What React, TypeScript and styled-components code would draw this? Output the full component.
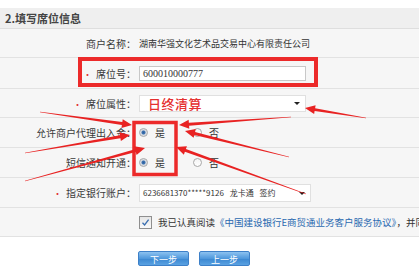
import styled, { createGlobalStyle } from 'styled-components'

const GlobalStyle = createGlobalStyle`
  html, body {
    margin: 0;
    padding: 0;
    background: #ffffff;
  }
  body {
    font-family: "Noto Sans CJK SC", "Noto Sans", sans-serif;
    color: #333;
  }
`

const Page = styled.div`
  position: relative;
  width: 419px;
  height: 279px;
  overflow: hidden;
  padding-top: 8px;
  box-sizing: border-box;
`

const SectionHeader = styled.div`
  height: 20px;
  line-height: 20px;
  padding-left: 5px;
  background: #efefef;
  border-bottom: 1px solid #dedede;
  font-size: 11px;
  font-weight: 700;
  color: #444;
`

const Form = styled.div`
  background: #f6f6f6;
`

const Row = styled.div<{ $h: number }>`
  display: grid;
  grid-template-columns: 136px 1fr;
  align-items: center;
  height: ${({ $h }) => $h}px;
  border-bottom: 1px solid #e2e2e2;
`

const Label = styled.div`
  text-align: right;
  font-size: 10px;
  color: #3a3a3a;
  white-space: nowrap;
`

const Bullet = styled.span`
  color: #e03030;
  font-size: 9px;
  margin-right: 4px;
`

const Value = styled.div`
  display: flex;
  align-items: center;
  padding-left: 3px;
  font-size: 9px;
  white-space: nowrap;
  overflow: hidden;
`

const TextInput = styled.div`
  width: 167px;
  height: 15px;
  box-sizing: border-box;
  border: 1px solid #c8c8c8;
  background: #fff;
  font-family: "Liberation Serif", serif;
  font-size: 10px;
  line-height: 13px;
  padding-left: 3px;
`

const Select = styled.div<{ $w: number; $h: number }>`
  position: relative;
  display: flex;
  align-items: center;
  width: ${({ $w }) => $w}px;
  height: ${({ $h }) => $h}px;
  box-sizing: border-box;
  border: 1px solid #e0e0e0;
  background: #fff;
  padding-left: 3px;

  &::after {
    content: '';
    position: absolute;
    right: 5px;
    top: 50%;
    margin-top: -1px;
    border-left: 3px solid transparent;
    border-right: 3px solid transparent;
    border-top: 3px solid #222;
  }
`

const SettleText = styled.span`
  color: #e53030;
  font-size: 13px;
  font-weight: 500;
  letter-spacing: 0.5px;
  padding-left: 5px;
`

const BankText = styled.span`
  font-size: 8px;
  color: #333;
  word-spacing: 4px;
`

const RadioGroup = styled.div`
  display: flex;
  align-items: center;
  gap: 28px;
  padding-left: 3px;
`

const RadioItem = styled.label`
  display: flex;
  align-items: center;
  gap: 7px;
  font-size: 10px;
  color: #333;
`

const RadioDot = styled.span<{ $checked?: boolean }>`
  width: 9px;
  height: 9px;
  border-radius: 50%;
  box-sizing: border-box;
  border: 1px solid #a8a8a8;
  background: ${({ $checked }) =>
    $checked
      ? 'radial-gradient(circle, #2f5f9a 0, #3c74b4 1.6px, #d4d8de 2.4px, #eef0f3 100%)'
      : 'linear-gradient(#f4f4f4, #ffffff)'};
`

const AgreeRow = styled.div`
  display: flex;
  align-items: center;
  gap: 6px;
  padding-left: 3px;
  font-size: 9.5px;
  white-space: nowrap;
`

const CheckBox = styled.span`
  display: flex;
  align-items: center;
  justify-content: center;
  width: 13px;
  height: 13px;
  box-sizing: border-box;
  border: 1px solid #8f8f8f;
  background: linear-gradient(#e6e6e6, #fafafa);
  flex-shrink: 0;
`

const Link = styled.span`
  color: #2a69b0;
`

const Buttons = styled.div`
  display: flex;
  gap: 10px;
  padding: 14px 0 0 138px;
`

const Button = styled.div`
  width: 51px;
  height: 15px;
  line-height: 15px;
  text-align: center;
  font-size: 9px;
  color: #fff;
  border-radius: 2px;
  border: 1px solid #3d80c8;
  box-sizing: border-box;
  background: linear-gradient(#8cc2f0, #4f98dc 50%, #3a86d0 51%, #5aa2e2);
`

const Overlay = styled.svg`
  position: absolute;
  left: 0;
  top: 0;
  pointer-events: none;
`

type Pt = [number, number]

function arrowPoints(tail: Pt, head: Pt) {
  const dx = head[0] - tail[0]
  const dy = head[1] - tail[1]
  const len = Math.hypot(dx, dy)
  const ux = dx / len
  const uy = dy / len
  const nx = -uy
  const ny = ux
  const hl = 10
  const base: Pt = [head[0] - ux * hl, head[1] - uy * hl]
  const p = (o: Pt, w: number): string => `${o[0] + nx * w},${o[1] + ny * w}`
  return [
    p(tail, 0.3),
    p(base, 1.5),
    p(base, 4.5),
    `${head[0]},${head[1]}`,
    p(base, -4.5),
    p(base, -1.5),
    p(tail, -0.3),
  ].join(' ')
}

const arrows: [Pt, Pt][] = [
  [[40, 112], [132, 125]],
  [[25, 153], [130, 135]],
  [[25, 181], [145, 148]],
  [[291, 117], [179, 125]],
  [[289, 157], [185, 131]],
  [[306, 194], [176, 147]],
  [[366, 118], [305, 108]],
]

export default function App() {
  return (
    <Page>
      <GlobalStyle />
      <SectionHeader>2.填写席位信息</SectionHeader>
      <Form>
        <Row $h={28}>
          <Label>商户名称：</Label>
          <Value>湖南华强文化艺术品交易中心有限责任公司</Value>
        </Row>
        <Row $h={30}>
          <Label>
            <Bullet>•</Bullet>席位号：
          </Label>
          <Value>
            <TextInput>600010000777</TextInput>
          </Value>
        </Row>
        <Row $h={28}>
          <Label>
            <Bullet>•</Bullet>席位属性：
          </Label>
          <Value>
            <Select $w={167} $h={17}>
              <SettleText>日终清算</SettleText>
            </Select>
          </Value>
        </Row>
        <Row $h={29}>
          <Label>允许商户代理出入金：</Label>
          <RadioGroup>
            <RadioItem>
              <RadioDot $checked />是
            </RadioItem>
            <RadioItem>
              <RadioDot />否
            </RadioItem>
          </RadioGroup>
        </Row>
        <Row $h={29}>
          <Label>短信通知开通：</Label>
          <RadioGroup>
            <RadioItem>
              <RadioDot $checked />是
            </RadioItem>
            <RadioItem>
              <RadioDot />否
            </RadioItem>
          </RadioGroup>
        </Row>
        <Row $h={29}>
          <Label>
            <Bullet>•</Bullet>指定银行账户：
          </Label>
          <Value>
            <Select $w={172} $h={18}>
              <BankText>6236681370*****9126 龙卡通 签约</BankText>
            </Select>
          </Value>
        </Row>
        <Row $h={28}>
          <div />
          <AgreeRow>
            <CheckBox>
              <svg width="9" height="9" viewBox="0 0 9 9">
                <path d="M1.5 4.8 L3.6 7 L7.6 1.6" fill="none" stroke="#3b6fb0" strokeWidth="1.3" />
              </svg>
            </CheckBox>
            <span>
              我已认真阅读<Link>《中国建设银行E商贸通业务客户服务协议》</Link>，并同意
            </span>
          </AgreeRow>
        </Row>
      </Form>
      <Buttons>
        <Button>下一步</Button>
        <Button>上一步</Button>
      </Buttons>
      <Overlay width="419" height="279" viewBox="0 0 419 279">
        <rect x="80" y="59" width="236" height="26" fill="none" stroke="#ec2a2a" strokeWidth="4" />
        <rect x="134" y="122.5" width="42" height="52" fill="none" stroke="#ec2a2a" strokeWidth="3.5" />
        {arrows.map(([t, h], i) => (
          <polygon key={i} points={arrowPoints(t, h)} fill="#e82222" />
        ))}
      </Overlay>
    </Page>
  )
}
